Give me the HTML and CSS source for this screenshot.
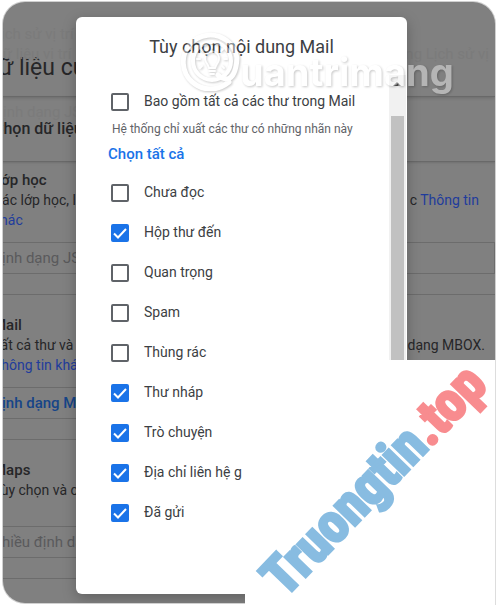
FILE: index.html
```html
<!DOCTYPE html>
<html lang="vi">
<head>
<meta charset="utf-8">
<meta name="viewport" content="width=device-width, initial-scale=1">
<title>Tùy chọn nội dung Mail</title>
<link rel="stylesheet" href="styles.css">
</head>
<body>
<div class="stage">
  <main class="page">
    <header class="page-title"><h1>ữ liệu củ</h1></header>
    <div class="ghost ghost-top"><p><span>Lịch sử vị trí</span></p><p><span>Dữ liệu vị trí</span><span>ng Lịch sử vị</span></p></div>
    <div class="ghost ghost-format">Định dạng JS</div>
    <div class="page-subtitle"><h2>Chọn dữ liệu</h2></div>
    <section class="product first">
      <h3>Lớp học</h3>
      <p class="line"><span>Các lớp học, l</span><span>c <a href="#classroom">Thông tin</a></span></p>
      <p class="line"><a href="#classroom">khác</a></p>
      <button class="format" type="button" disabled>ịnh dạng JS</button>
    </section>
    <section class="product">
      <h3>Mail</h3>
      <p class="line wide"><span>Tất cả thư và</span><span>dạng MBOX.</span></p>
      <p class="line"><a href="#mail">Thông tin khá</a></p>
      <button class="format active" type="button">ịnh dạng MB</button>
    </section>
    <section class="product short">
      <h3>Maps</h3>
      <p class="line"><span>Tùy chọn và c</span></p>
      <button class="format" type="button" disabled>hiều định dạ</button>
    </section>
  </main>

  <div class="dialog" role="dialog" aria-labelledby="dialog-title">
    <h2 class="dialog-title" id="dialog-title">Tùy chọn nội dung Mail</h2>
    <div class="dialog-body">
      <form class="options">
        <label class="option"><input type="checkbox"><span>Bao gồm tất cả các thư trong Mail</span></label>
        <p class="hint">Hệ thống chỉ xuất các thư có những nhãn này</p>
        <button class="select-all" type="button">Chọn tất cả</button>
        <label class="option"><input type="checkbox"><span>Chưa đọc</span></label>
        <label class="option"><input type="checkbox" checked><span>Hộp thư đến</span></label>
        <label class="option"><input type="checkbox"><span>Quan trọng</span></label>
        <label class="option"><input type="checkbox"><span>Spam</span></label>
        <label class="option"><input type="checkbox"><span>Thùng rác</span></label>
        <label class="option"><input type="checkbox" checked><span>Thư nháp</span></label>
        <label class="option"><input type="checkbox" checked><span>Trò chuyện</span></label>
        <label class="option"><input type="checkbox" checked><span>Địa chỉ liên hệ g</span></label>
        <label class="option"><input type="checkbox" checked><span>Đã gửi</span></label>
      </form>
      <div class="scrollbar"><span class="arrow"></span><span class="thumb"></span></div>
    </div>
  </div>
</div>

<div class="brand">
  <svg class="brand-mark" viewBox="0 0 60 60" width="60" height="60" aria-hidden="true">
    <g fill="none" stroke-linecap="round">
      <path d="M49 51Q40 58 31 58A27 27 0 1 1 57 27Q56 45 48 48Q42 48 38 44" stroke-width="5"/>
      <circle cx="32" cy="30" r="19" stroke-width="4"/>
      <g stroke-width="2">
        <path d="M29 37Q28 34 26 31A7 7 0 1 1 38 31Q36 34 35 37ZM29 40H35M30 43H34M32 17V15M23 20L21 18M41 20L43 18M20 28H17M44 28H47M22 35L20 37M42 35L44 37"/>
      </g>
    </g>
  </svg>
  <span>uantrimang</span>
</div>
<div class="cover"><div class="stamp">Truongtin<span>.top</span></div></div>
</body>
</html>
```

FILE: styles.css
```css
* { box-sizing: border-box; }

body {
  margin: 0;
  min-height: 605px;
  padding: 2px 1px 2px 3px;
  position: relative;
  overflow: hidden;
  background: #fff;
  font: 14px/20px Roboto, "Noto Sans", sans-serif;
  color: #202124;
}

h1, h2, h3, p { margin: 0; font-weight: 400; }
a { color: #1f3c9c; text-decoration: none; }
button { font: inherit; border: 0; background: none; padding: 0; }

.stage {
  position: relative;
  min-height: 601px;
  overflow: hidden;
  border-radius: 22px;
  background: #808080;
  box-shadow: 0 0 0 1px #d0d0d0;
}

/* Page behind the dialog; its left edge runs past the frame. */
.page { margin-left: -10px; color: #262628; }

.page-title {
  height: 95px;
  padding: 50px 0 0 6px;
  border-bottom: 1px solid #696969;
  box-shadow: 0 1px 3px #6c6c6c;
}
.page-title h1 { font-size: 23px; line-height: 32px; }

.page-subtitle {
  height: 65px;
  padding: 22px 0 0 0;
  border-bottom: 1px solid #696969;
  box-shadow: 0 1px 2px #707070;
}
.page-subtitle h2 { font-size: 16px; line-height: 20px; font-weight: 500; }

.ghost { position: absolute; left: -10px; right: 6px; font-size: 15px; color: #7b7b7b; }
.ghost-top { top: 22px; }
.ghost-top p { display: flex; justify-content: space-between; }
.ghost-format { top: 100px; }

.product { padding: 20px 0; border-bottom: 1px solid #6c6c6c; }
.product.first { padding-top: 8px; }
.product h3 { font-size: 15px; line-height: 20px; font-weight: 500; }
.line { display: flex; justify-content: space-between; padding: 0 16px 0 0; }
.line.wide { padding-right: 10px; }

.format {
  display: block;
  width: 100%;
  height: 32px;
  margin-top: 12px;
  padding-left: 8px;
  border: 1px solid #6c6c6c;
  text-align: left;
  font-size: 15px;
  color: #5a5a5c;
}
.format.active { color: #164588; font-weight: 500; }
.short .format { margin-top: 26px; }

.dialog {
  position: absolute;
  top: 15px;
  left: 73px;
  right: 88px;
  bottom: 9px;
  display: flex;
  flex-direction: column;
  border-radius: 6px;
  overflow: hidden;
  background: #fff;
  box-shadow: 0 4px 14px rgba(0, 0, 0, .25);
}
.dialog-title {
  padding: 18px 0 16px;
  font-size: 18px;
  line-height: 24px;
  text-align: center;
  color: #3c4043;
}
.dialog-body { flex: 1; display: flex; }
.options { flex: 1; padding: 6px 0 0 32px; color: #3c4043; }

.option { display: flex; align-items: center; gap: 12px; height: 40px; padding-left: 3px; white-space: nowrap; }
.option input {
  appearance: none;
  width: 18px;
  height: 18px;
  margin: 1px 3px 0 0;
  border: 2px solid #5f6368;
  border-radius: 2px;
}
.option input:checked {
  border-color: #1a73e8;
  background: #1a73e8 url("data:image/svg+xml,%3Csvg xmlns='http://www.w3.org/2000/svg' viewBox='0 0 14 14'%3E%3Cpath d='M1 7.5L5 11.5L13 3' fill='none' stroke='white' stroke-width='2'/%3E%3C/svg%3E");
}
.hint { padding-left: 4px; font-size: 12px; line-height: 16px; color: #5f6368; white-space: nowrap; }
.select-all { display: block; margin: 7px 0 8px; font-size: 15px; line-height: 20px; font-weight: 500; color: #1a73e8; }

.scrollbar {
  width: 18px;
  padding: 7px 3px 0 2px;
  display: flex;
  flex-direction: column;
  align-items: center;
  gap: 30px;
  background: #f1f1f1;
  border-right: 1px solid #fff;
}
.arrow { border: 4px solid transparent; border-top: 0; border-bottom-color: #505050; }
.thumb { width: 13px; flex: 1; background: #c1c1c1; }

.brand {
  position: absolute;
  top: 31px;
  left: 180px;
  display: flex;
  align-items: center;
  font: 700 38px/60px Inter, sans-serif;
  color: #fff;
  opacity: .42;
  filter: drop-shadow(1px 1px 1px rgba(0, 0, 0, .5));
}
.brand-mark { stroke: #fff; }
.brand span { padding-top: 22px; line-height: 38px; }

/* White panel with the diagonal site name. */
.cover {
  position: absolute;
  top: 360px;
  right: 0;
  bottom: 0;
  left: 245px;
  border-right: 1px solid #ddd;
  background: #fff;
}
.stamp {
  position: absolute;
  left: 41px;
  bottom: 5px;
  font: 700 54px/40px "Liberation Sans Narrow", "Roboto Condensed", sans-serif;
  color: #88bce1;
  -webkit-text-stroke: 3px currentColor;
  white-space: nowrap;
  transform: rotate(-46deg);
  transform-origin: 0 100%;
}
.stamp span { color: #f88c8f; }
```
